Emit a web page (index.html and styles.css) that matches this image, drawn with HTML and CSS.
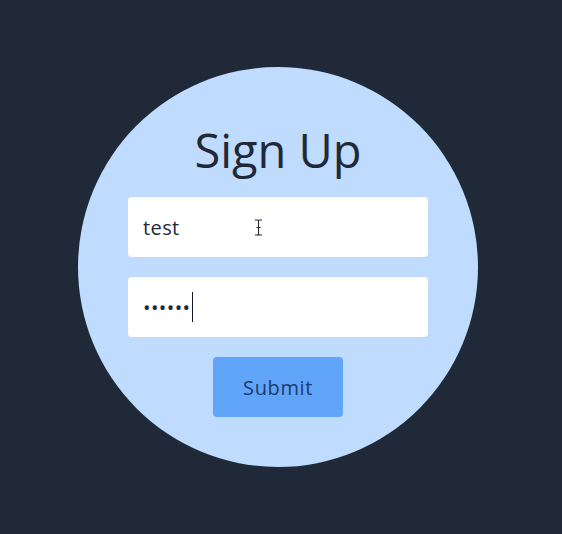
FILE: index.html
```html
<!DOCTYPE html>
<html lang="en">
<head>
<meta charset="utf-8">
<title>Sign Up</title>
<link rel="stylesheet" href="styles.css">
</head>
<body>
<main class="circle">
  <form class="form">
    <h1 class="title">Sign Up</h1>
    <div class="field">
      <input class="input" type="text" value="test">
      <svg class="ibeam" width="9" height="17" viewBox="0 0 9 17" aria-hidden="true">
        <path d="M1 1h2.5c0.6 0 1 0.4 1 1v13c0 0.6 0.4 1 1 1H8M8 1H5.5c-0.6 0-1 0.4-1 1v13c0 0.6-0.4 1-1 1H1M2.5 8.5h4" fill="none" stroke="#1f2937" stroke-width="1.1"/>
      </svg>
    </div>
    <div class="field">
      <input class="input" type="password" value="123456">
      <span class="caret"></span>
    </div>
    <button class="button" type="button">Submit</button>
  </form>
</main>
</body>
</html>
```
FILE: styles.css
```css
html, body {
  margin: 0;
  height: 100%;
}
body {
  background: #1f2937;
  display: flex;
  align-items: center;
  justify-content: center;
  padding-right: 6px;
  box-sizing: border-box;
  font-family: "Open Sans", "DejaVu Sans", sans-serif;
}
.circle {
  width: 400px;
  height: 400px;
  border-radius: 50%;
  background: #bfdbfe;
  display: flex;
  align-items: center;
  justify-content: center;
}
.form {
  display: flex;
  flex-direction: column;
  align-items: center;
  gap: 20px;
}
.title {
  margin: 0;
  height: 60px;
  line-height: 66px;
  font-size: 47px;
  font-weight: 400;
  color: #1f2937;
}
.field {
  position: relative;
  width: 300px;
  height: 60px;
}
.input {
  width: 100%;
  height: 100%;
  box-sizing: border-box;
  border: none;
  border-radius: 4px;
  background: #ffffff;
  padding: 0 15px;
  font-family: inherit;
  font-size: 20px;
  letter-spacing: 0.4px;
  color: #1f2937;
  outline: none;
}
.ibeam {
  position: absolute;
  left: 126px;
  top: 22px;
}
.caret {
  position: absolute;
  left: 64px;
  top: 15px;
  width: 1px;
  height: 30px;
  background: #111827;
}
.button {
  width: 130px;
  height: 60px;
  border: none;
  border-radius: 4px;
  background: #60a5fa;
  color: #1e3a6e;
  font-family: inherit;
  font-size: 20px;
  letter-spacing: 0.6px;
  cursor: pointer;
}
```
